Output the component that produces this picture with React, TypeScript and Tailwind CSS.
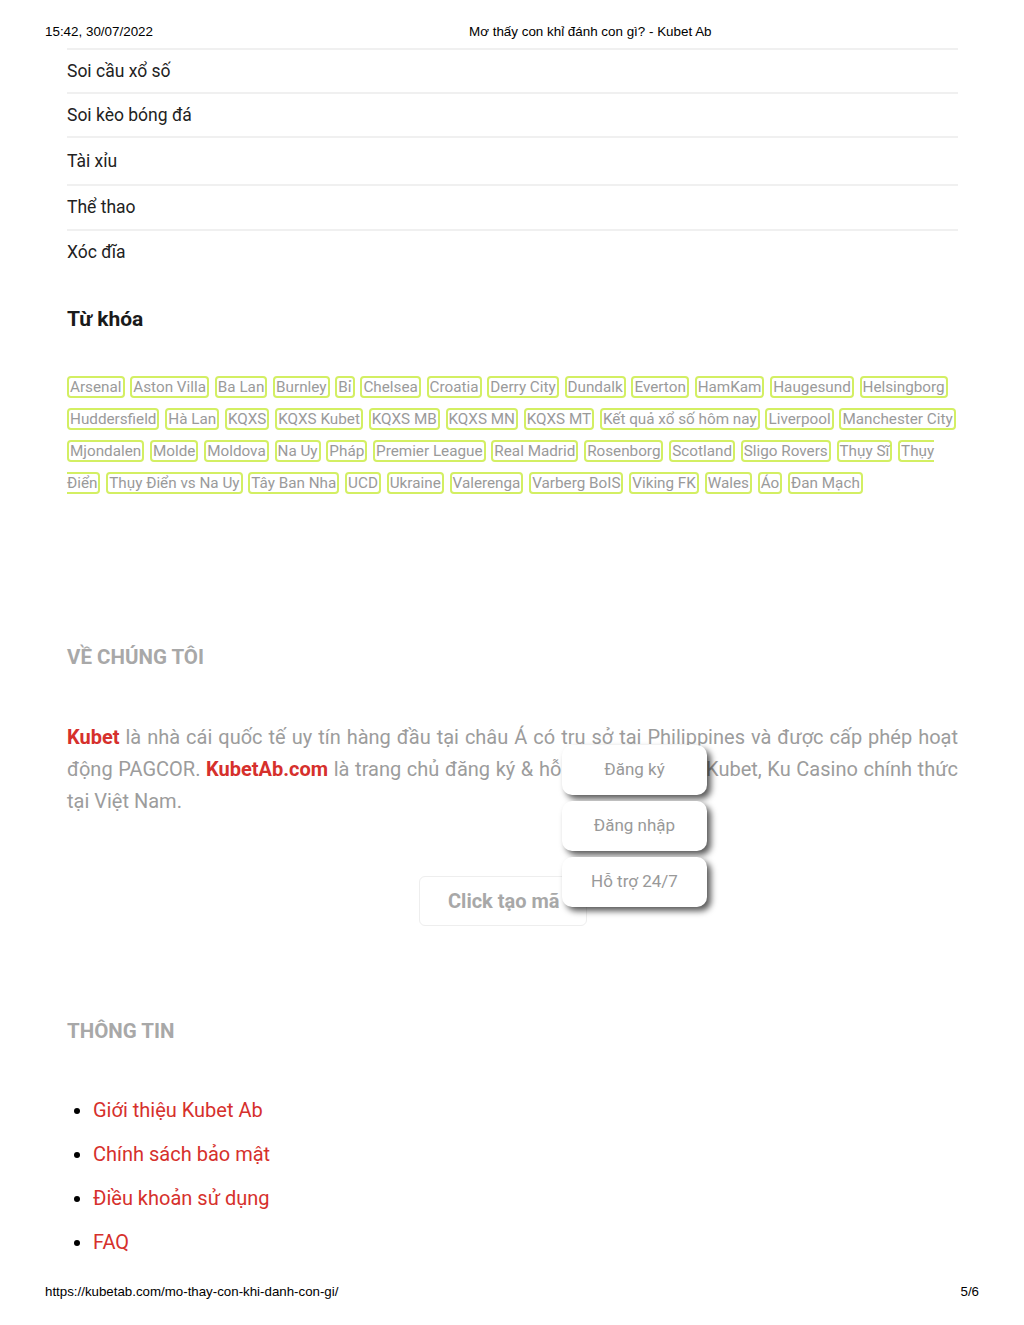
import React from "react"

const menu = [
  { label: "Soi cầu xổ số", h: "h-[44px]" },
  { label: "Soi kèo bóng đá", h: "h-[44px]" },
  { label: "Tài xỉu", h: "h-[48px]" },
  { label: "Thể thao", h: "h-[45px]" },
  { label: "Xóc đĩa", h: "h-[44px]" },
]

const tags = [
  "Arsenal", "Aston Villa", "Ba Lan", "Burnley", "Bỉ", "Chelsea", "Croatia", "Derry City",
  "Dundalk", "Everton", "HamKam", "Haugesund", "Helsingborg", "Huddersfield", "Hà Lan",
  "KQXS", "KQXS Kubet", "KQXS MB", "KQXS MN", "KQXS MT", "Kết quả xổ số hôm nay",
  "Liverpool", "Manchester City", "Mjondalen", "Molde", "Moldova", "Na Uy", "Pháp",
  "Premier League", "Real Madrid", "Rosenborg", "Scotland", "Sligo Rovers", "Thụy Sĩ",
  "Thụy Điển", "Thụy Điển vs Na Uy", "Tây Ban Nha", "UCD", "Ukraine", "Valerenga",
  "Varberg BoIS", "Viking FK", "Wales", "Áo", "Đan Mạch",
]

const info = ["Giới thiệu Kubet Ab", "Chính sách bảo mật", "Điều khoản sử dụng", "FAQ"]

const floating = ["Đăng ký", "Đăng nhập", "Hỗ trợ 24/7"]

export default function App() {
  return (
    <div className="relative w-[1024px] h-[1325px] bg-white overflow-hidden font-['Roboto',sans-serif]">
      {/* print header */}
      <div className="h-[48px] pt-[24px] pl-[45px] flex text-[13.4px] leading-[16px] text-black font-['Liberation_Sans',Arial,sans-serif]">
        <div className="w-[424px]">15:42, 30/07/2022</div>
        <div>Mơ thấy con khỉ đánh con gì? - Kubet Ab</div>
      </div>

      <div className="ml-[67px] w-[891px]">
        {/* category list */}
        <div>
          {menu.map((m) => (
            <div
              key={m.label}
              className={`${m.h} flex items-center border-t-2 border-[#f0f0f0] text-[17.5px] text-[#222]`}
            >
              {m.label}
            </div>
          ))}
        </div>

        <h3 className="mt-[32px] text-[21px] leading-[28px] font-bold text-[#1a1a1a]">Từ khóa</h3>

        <div className="mt-[38px] h-[128px] text-[15.25px] leading-[32px] text-[#9a9a9a]">
          {tags.map((t) => (
            <React.Fragment key={t}>
              <span className="border-2 border-[#d3ef63] rounded-[4px] px-[1px] mr-[2px]">{t}</span>{" "}
            </React.Fragment>
          ))}
        </div>

        <h3 className="mt-[144px] text-[20.5px] leading-[28px] font-bold text-[#a8a8a8] uppercase">Về chúng tôi</h3>

        <p className="mt-[50px] text-[20px] leading-[32px] text-[#9c9c9c] text-justify">
          <span className="font-bold text-[#d6302c]">Kubet</span> là nhà cái quốc tế uy tín hàng đầu tại châu Á có
          trụ sở tại Philippines và được cấp phép hoạt động PAGCOR.{" "}
          <span className="font-bold text-[#d6302c]">KubetAb.com</span> là trang chủ đăng ký &amp; hỗ trợ khách hàng
          Kubet, Ku Casino chính thức tại Việt Nam.
        </p>

        <div className="mt-[59px] ml-[352px] w-[168px] h-[50px] border border-[#eeeeee] rounded-[6px] flex items-center pl-[28px] text-[20px] font-bold text-[#a8a8a8] whitespace-nowrap">
          Click tạo mã
        </div>

        <h3 className="mt-[91px] text-[20.5px] leading-[28px] font-bold text-[#a8a8a8] uppercase">Thông tin</h3>

        <ul className="mt-[43px] list-disc pl-[26px] text-[20px] leading-[44px] text-[#d6302c] marker:text-black">
          {info.map((i) => (
            <li key={i}>{i}</li>
          ))}
        </ul>
      </div>

      {/* print footer */}
      <div className="mt-[20px] px-[45px] flex justify-between text-[13.3px] leading-[16px] text-black font-['Liberation_Sans',Arial,sans-serif]">
        <div>https://kubetab.com/mo-thay-con-khi-danh-con-gi/</div>
        <div>5/6</div>
      </div>

      {/* floating action buttons */}
      <div className="absolute left-[562px] top-[745px] flex flex-col gap-[6px]">
        {floating.map((f) => (
          <div
            key={f}
            className="w-[145px] h-[50px] rounded-[10px] bg-white flex items-center justify-center text-[17px] text-[#999] shadow-[4px_4px_6px_rgba(0,0,0,0.65)]"
          >
            {f}
          </div>
        ))}
      </div>
    </div>
  )
}
